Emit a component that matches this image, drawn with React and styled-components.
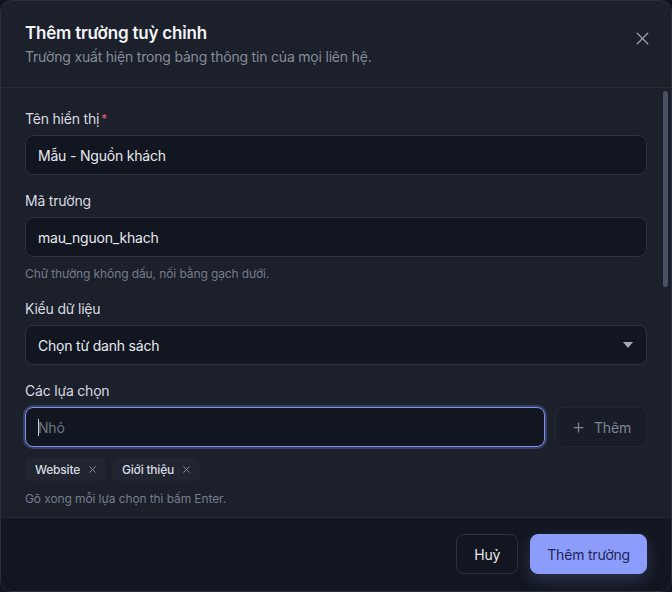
import React, { useState } from 'react';
import styled, { createGlobalStyle } from 'styled-components';
import { X, Plus } from 'lucide-react';

const GlobalStyle = createGlobalStyle`
  html, body {
    margin: 0;
    padding: 0;
    background: #10141c;
  }
  body {
    font-family: Inter, "Noto Sans", sans-serif;
    letter-spacing: -0.2px;
    -webkit-font-smoothing: antialiased;
  }
  * { box-sizing: border-box; }
`;

const Dialog = styled.div`
  width: 672px;
  height: 592px;
  display: flex;
  flex-direction: column;
  background: #1b202b;
  border: 1px solid #2a303c;
  border-radius: 12px;
  overflow: hidden;
  position: relative;
`;

const Header = styled.div`
  display: flex;
  align-items: flex-start;
  padding: 20px 24px 20px;
  border-bottom: 1px solid #262c37;
`;

const HeaderText = styled.div`
  flex: 1;
`;

const Title = styled.h2`
  margin: 0;
  font-size: 17px;
  line-height: 24px;
  font-weight: 600;
  color: #f3f4f6;
  letter-spacing: -0.2px;
`;

const Subtitle = styled.p`
  margin: 2px 0 0;
  font-size: 14px;
  line-height: 20px;
  color: #868d9a;
`;

const CloseButton = styled.button`
  border: 0;
  background: transparent;
  color: #9aa1ad;
  padding: 0;
  margin: 4px -8px 0 0;
  width: 26px;
  height: 26px;
  display: flex;
  align-items: center;
  justify-content: center;
`;

const Body = styled.div`
  flex: 1;
  overflow: hidden;
  padding: 21px 24px 24px;
  display: flex;
  flex-direction: column;
  gap: 16px;
`;

const ScrollThumb = styled.div`
  position: absolute;
  right: 3px;
  top: 90px;
  width: 5px;
  height: 196px;
  border-radius: 3px;
  background: #4a5162;
`;

const Field = styled.div`
  display: flex;
  flex-direction: column;
`;

const Label = styled.label`
  font-size: 14px;
  line-height: 20px;
  font-weight: 400;
  color: #d9dce2;
  margin-bottom: 6px;
`;

const Required = styled.span`
  color: #e2607d;
  margin-left: 2px;
  font-size: 12px;
  vertical-align: top;
`;

const InputWrap = styled.div`
  position: relative;
  flex: 1;
  display: flex;
`;

const Caret = styled.span`
  position: absolute;
  left: 13px;
  top: 12px;
  width: 1px;
  height: 17px;
  background: #c9cdd6;
`;

const Input = styled.input`
  width: 100%;
  height: 40px;
  padding: 0 12px;
  background: #121621;
  border: 1px solid ${(p) => (p.focused ? '#8090f2' : '#2d3340')};
  box-shadow: ${(p) => (p.focused ? '0 0 0 2px rgba(128, 144, 242, 0.28)' : 'none')};
  border-radius: 8px;
  color: #e8eaee;
  font-family: inherit;
  letter-spacing: inherit;
  font-size: 14px;
  outline: none;

  &::placeholder {
    color: #6f7684;
  }
`;

const Hint = styled.div`
  margin-top: ${(p) => p.gap || 8}px;
  font-size: 12px;
  line-height: 18px;
  color: #767d8b;
  letter-spacing: -0.1px;
`;

const SelectBox = styled.div`
  height: 40px;
  padding: 0 12px;
  display: flex;
  align-items: center;
  justify-content: space-between;
  background: #121621;
  border: 1px solid #2d3340;
  border-radius: 8px;
  color: #e8eaee;
  font-size: 14px;
`;

const Chevron = styled.span`
  width: 0;
  height: 0;
  border-left: 5px solid transparent;
  border-right: 5px solid transparent;
  border-top: 6px solid #a3a9b4;
  margin-right: 1px;
`;

const OptionRow = styled.div`
  display: flex;
  gap: 10px;
`;

const AddButton = styled.button`
  flex: 0 0 92px;
  height: 40px;
  display: flex;
  align-items: center;
  justify-content: center;
  gap: 8px;
  background: #181d27;
  border: 1px solid #232833;
  border-radius: 8px;
  color: #7f8694;
  font-family: inherit;
  letter-spacing: inherit;
  font-size: 14px;
`;

const Tags = styled.div`
  display: flex;
  gap: 6px;
  margin-top: 10px;
`;

const Tag = styled.span`
  display: inline-flex;
  align-items: center;
  gap: 7px;
  height: 24px;
  padding: 0 8px 0 10px;
  background: #20252f;
  border-radius: 6px;
  font-size: 12px;
  font-weight: 500;
  color: #d6dae1;
`;

const TagRemove = styled.span`
  display: flex;
  color: #8f96a3;
`;

const Footer = styled.div`
  display: flex;
  justify-content: flex-end;
  gap: 12px;
  padding: 16px 24px 17px;
  background: #121620;
  border-top: 1px solid #252b36;
`;

const Button = styled.button`
  height: 40px;
  padding: 0 ${(p) => (p.primary ? 16 : 17)}px;
  border-radius: 8px;
  font-family: inherit;
  letter-spacing: inherit;
  font-size: 14px;
  font-weight: 400;
  border: 1px solid ${(p) => (p.primary ? '#8c9cfb' : '#2b313d')};
  background: ${(p) => (p.primary ? '#8c9cfb' : '#121620')};
  color: ${(p) => (p.primary ? '#1f2656' : '#e6e8ec')};
  box-shadow: ${(p) => (p.primary ? '0 6px 16px rgba(140, 156, 251, 0.22)' : 'none')};
`;

const fields = [
  { label: 'Tên hiển thị', value: 'Mẫu - Nguồn khách', required: true },
  { label: 'Mã trường', value: 'mau_nguon_khach', hint: 'Chữ thường không dấu, nối bằng gạch dưới.' },
];

export default function App() {
  const [options] = useState(['Website', 'Giới thiệu']);

  return (
    <>
      <GlobalStyle />
      <Dialog>
        <Header>
          <HeaderText>
            <Title>Thêm trường tuỳ chỉnh</Title>
            <Subtitle>Trường xuất hiện trong bảng thông tin của mọi liên hệ.</Subtitle>
          </HeaderText>
          <CloseButton aria-label="Đóng">
            <X size={21} strokeWidth={1.5} />
          </CloseButton>
        </Header>

        <Body>
          {fields.map((f) => (
            <Field key={f.label}>
              <Label>
                {f.label}
                {f.required && <Required>*</Required>}
              </Label>
              <Input defaultValue={f.value} />
              {f.hint && <Hint>{f.hint}</Hint>}
            </Field>
          ))}

          <Field>
            <Label>Kiểu dữ liệu</Label>
            <SelectBox>
              Chọn từ danh sách
              <Chevron />
            </SelectBox>
          </Field>

          <Field>
            <Label>Các lựa chọn</Label>
            <OptionRow>
              <InputWrap>
                <Input focused placeholder="Nhỏ" />
                <Caret />
              </InputWrap>
              <AddButton>
                <Plus size={15} strokeWidth={2} />
                Thêm
              </AddButton>
            </OptionRow>
            <Tags>
              {options.map((o) => (
                <Tag key={o}>
                  {o}
                  <TagRemove>
                    <X size={11} strokeWidth={2} />
                  </TagRemove>
                </Tag>
              ))}
            </Tags>
            <Hint gap={9}>Gõ xong mỗi lựa chọn thì bấm Enter.</Hint>
          </Field>
        </Body>
        <ScrollThumb />

        <Footer>
          <Button>Huỷ</Button>
          <Button primary>Thêm trường</Button>
        </Footer>
      </Dialog>
    </>
  );
}
